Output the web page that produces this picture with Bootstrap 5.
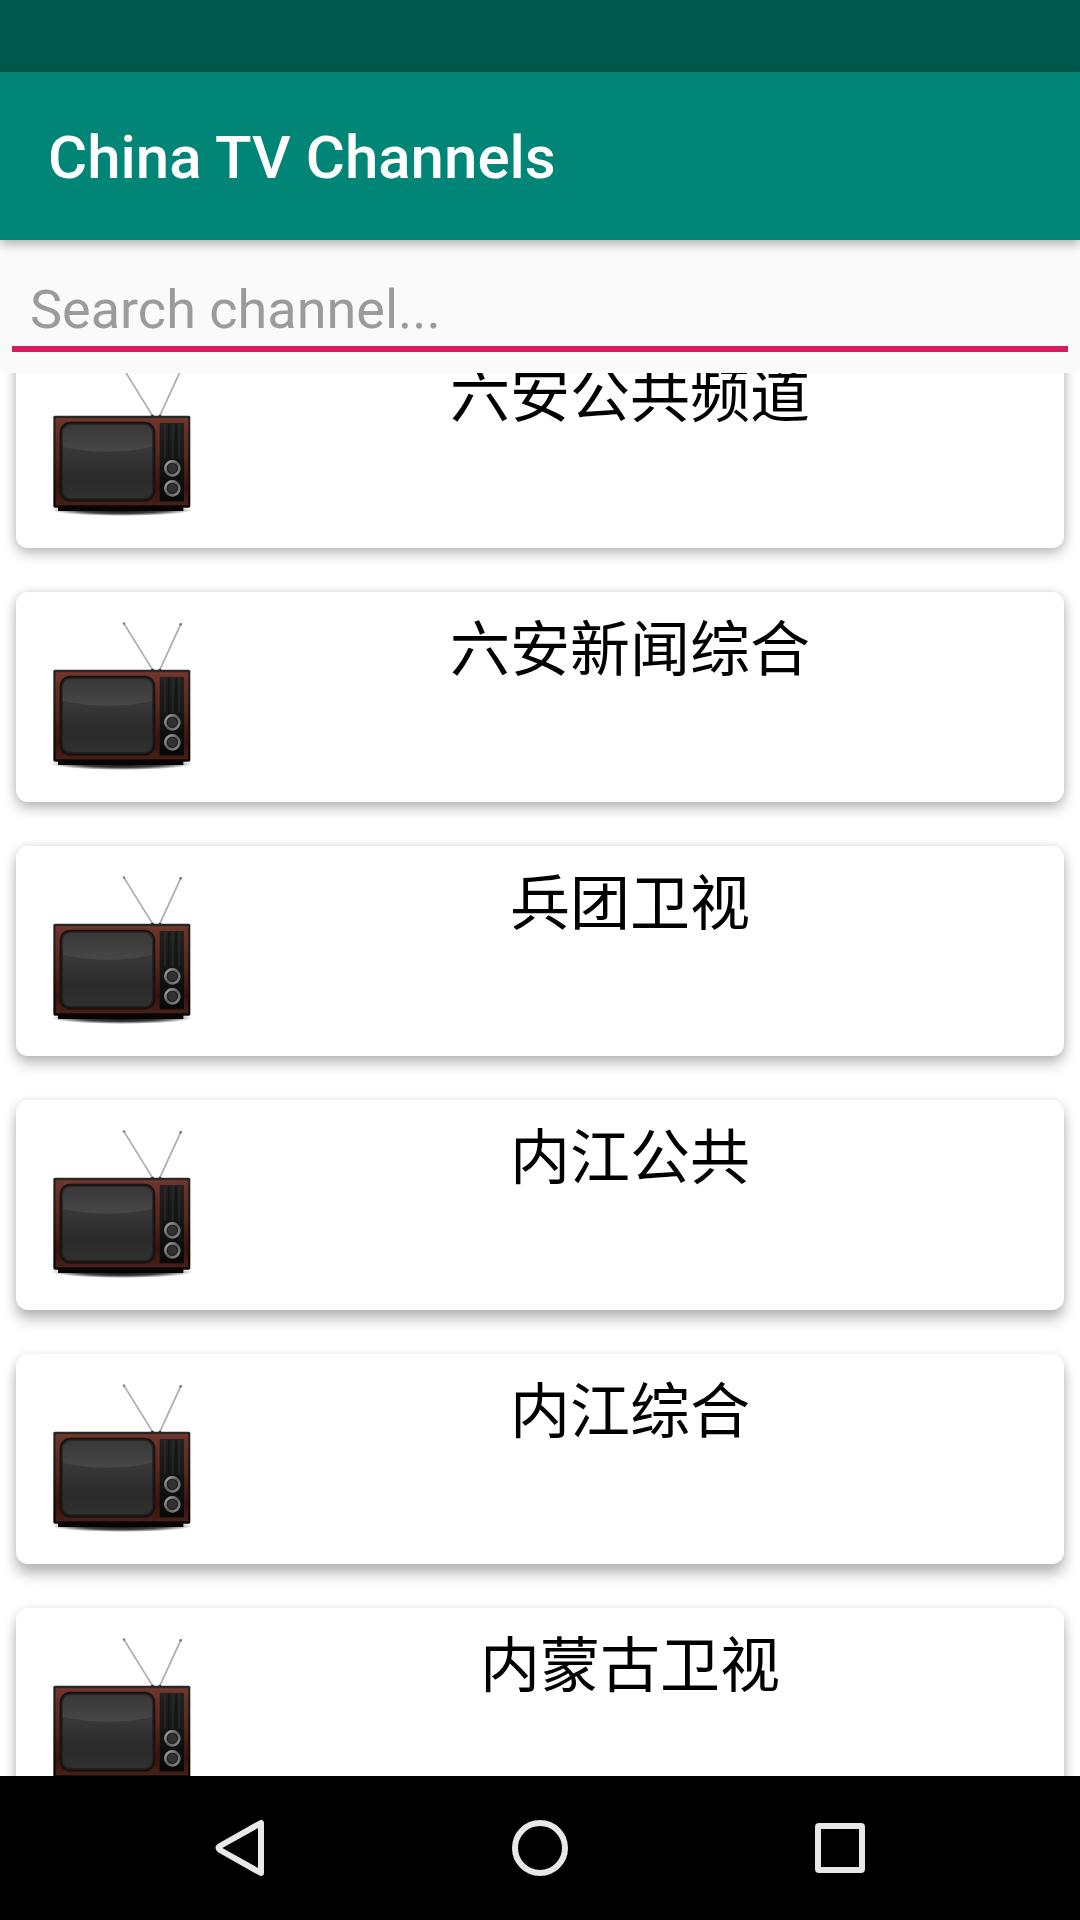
<!DOCTYPE html>
<html lang="en">
<head>
<meta charset="utf-8">
<meta name="viewport" content="width=device-width, initial-scale=1">
<title>China TV Channels</title>
<link href="https://cdn.jsdelivr.net/npm/bootstrap@5.3.0/dist/css/bootstrap.min.css" rel="stylesheet">
<style>
body { font-family: Roboto, "Noto Sans CJK SC", sans-serif; background: #fafafa; }
.status-strip { height: 72px; background: #00574b; }
.app-bar { min-height: 168px; padding: 4px 48px 0; background: #008577; box-shadow: 0 4px 10px rgba(0,0,0,.3); z-index: 2; }
.app-title { font-size: 60px; line-height: 72px; font-weight: 500; }
.search-area { padding: 22px 12px 21px; }
.search-box, .search-box:focus { height: 90px; padding: 10px 18px 0; font-size: 54px; line-height: 64px; background: transparent; border: 0; border-bottom: 6px solid #d81b60; border-radius: 0; box-shadow: none; color: #000; }
.search-box::placeholder { color: #9b9b9b; opacity: 1; }
.channel-view { background: #fff; min-height: 0; }
/* The list rests part-way through the first row */
.channel-list { margin-top: -35px; padding: 0 16px; gap: 44px; }
.channel-card { height: 210px; padding: 24px 0 0 30px; border: 0; border-radius: 12px; background: #fff; box-shadow: 0 var(--drop) 14px rgba(0,0,0,.27), 0 0 8px rgba(0,0,0,.09); }
.channel-list li:nth-child(1) { --drop: 5px; }
.channel-list li:nth-child(2) { --drop: 6px; }
.channel-list li:nth-child(3) { --drop: 7px; }
.channel-list li:nth-child(4) { --drop: 9px; }
.channel-list li:nth-child(n+5) { --drop: 10px; }
.tv-icon { width: 150px; height: 156px; }
.channel-name { font-size: 60px; line-height: 70px; font-weight: 400; color: #000; }
.nav-keys { height: 144px; background: #000; }
.nav-key { width: 28%; max-width: 300px; }
.nav-key svg { width: 64px; height: 64px; fill: none; stroke: #e8e8e8; stroke-width: 6; stroke-linejoin: round; }
</style>
<script src="https://cdn.jsdelivr.net/npm/bootstrap@5.3.0/dist/js/bootstrap.bundle.min.js"></script>
</head>
<body class="d-flex flex-column vh-100 overflow-hidden">
<svg width="0" height="0" class="position-absolute" aria-hidden="true">
  <defs>
    <linearGradient id="wood" x1="0" y1="0" x2="0" y2="1"><stop offset="0" stop-color="#70352a"/><stop offset=".45" stop-color="#55261c"/><stop offset=".8" stop-color="#36140e"/><stop offset="1" stop-color="#482017"/></linearGradient>
    <linearGradient id="edge" x1="0" y1="0" x2="0" y2="1"><stop offset="0" stop-color="#2a2826"/><stop offset="1" stop-color="#0c0404"/></linearGradient>
    <linearGradient id="glass" x1="0" y1="0" x2="0" y2="1"><stop offset="0" stop-color="#404040"/><stop offset=".4" stop-color="#363636"/><stop offset=".7" stop-color="#2a2a2a"/><stop offset="1" stop-color="#303030"/></linearGradient>
    <linearGradient id="shine" x1="0" y1="0" x2="0" y2="1"><stop offset="0" stop-color="#383838"/><stop offset="1" stop-color="#474747"/></linearGradient>
    <linearGradient id="ring" x1="0" y1="0" x2="1" y2="1"><stop offset="0" stop-color="#a8a8a8"/><stop offset=".5" stop-color="#5c5c5c"/><stop offset="1" stop-color="#8a8a8a"/></linearGradient>
    <linearGradient id="panel" x1="0" y1="0" x2="0" y2="1"><stop offset="0" stop-color="#222"/><stop offset="1" stop-color="#070707"/></linearGradient>
    <radialGradient id="floor"><stop offset="0" stop-color="#000"/><stop offset=".6" stop-color="#111" stop-opacity=".8"/><stop offset="1" stop-color="#000" stop-opacity="0"/></radialGradient>
    <symbol id="tv" viewBox="48 48 450 468">
      <g fill="none" stroke-linecap="round">
        <path d="M282 71L367 208M452 73L390 208" stroke="#a0a0a0" stroke-width="5"/>
        <path d="M282 71L367 208M452 73L390 208" stroke="#c4c4c4" stroke-width="2"/>
      </g>
      <circle cx="282" cy="71" r="4" fill="#888"/><circle cx="452" cy="73" r="4" fill="#777"/>
      <path d="M361 211l4-5h5l3 5zM385 211l3-5h4l3 5z" fill="#333"/>
      <ellipse cx="276" cy="492" rx="212" ry="18" fill="url(#floor)"/>
      <path d="M84 480H460V495H84Z" fill="#050505"/>
      <rect x="70" y="209" width="411" height="276" rx="5" fill="url(#edge)"/>
      <rect x="77" y="217" width="397" height="261" rx="2" fill="url(#wood)"/>
      <path d="M78 220H473" stroke="#84402f" stroke-width="3" opacity=".5"/>
      <rect x="89" y="227" width="287" height="240" rx="32" fill="#1a100e"/>
      <rect x="95" y="233" width="275" height="227" rx="26" fill="url(#glass)"/>
      <path d="M96 302V260Q97 234 121 234H344Q369 234 369 260V302Q235 332 96 302Z" fill="url(#shine)"/>
      <rect x="96" y="234" width="273" height="225" rx="26" fill="none" stroke="#181818" stroke-width="6" opacity=".55"/>
      <rect x="389" y="231" width="73" height="235" fill="url(#panel)"/>
      <path d="M405 234V338M428 234V338M448 234V338" stroke="#303030" stroke-width="5" opacity=".6"/>
      <path d="M416 234V340M438 234V340" stroke="#101010" stroke-width="4" opacity=".7"/>
      <g fill="#282a2a" stroke="url(#ring)" stroke-width="8"><circle cx="427" cy="367" r="21"/><circle cx="427" cy="427" r="21"/></g>
      <g fill="#303232" stroke="#1c1c1c" stroke-width="3"><circle cx="427" cy="367" r="15"/><circle cx="427" cy="427" r="15"/></g>
    </symbol>
  </defs>
</svg>

<div class="status-strip flex-shrink-0"></div>
<header class="app-bar d-flex align-items-center flex-shrink-0 position-relative">
  <h1 class="app-title text-white mb-0">China TV Channels</h1>
</header>
<form class="search-area flex-shrink-0" role="search">
  <label for="channelSearch" class="visually-hidden">Search channel</label>
  <input id="channelSearch" type="text" class="form-control search-box" placeholder="Search channel...">
</form>
<main class="channel-view flex-grow-1 overflow-hidden">
  <ul class="channel-list list-unstyled d-flex flex-column mb-0" lang="zh-CN">
    <li class="card channel-card flex-row"><svg class="tv-icon flex-shrink-0" aria-hidden="true"><use href="#tv"/></svg><h2 class="channel-name flex-grow-1 text-center mb-0">六安公共频道</h2></li>
    <li class="card channel-card flex-row"><svg class="tv-icon flex-shrink-0" aria-hidden="true"><use href="#tv"/></svg><h2 class="channel-name flex-grow-1 text-center mb-0">六安新闻综合</h2></li>
    <li class="card channel-card flex-row"><svg class="tv-icon flex-shrink-0" aria-hidden="true"><use href="#tv"/></svg><h2 class="channel-name flex-grow-1 text-center mb-0">兵团卫视</h2></li>
    <li class="card channel-card flex-row"><svg class="tv-icon flex-shrink-0" aria-hidden="true"><use href="#tv"/></svg><h2 class="channel-name flex-grow-1 text-center mb-0">内江公共</h2></li>
    <li class="card channel-card flex-row"><svg class="tv-icon flex-shrink-0" aria-hidden="true"><use href="#tv"/></svg><h2 class="channel-name flex-grow-1 text-center mb-0">内江综合</h2></li>
    <li class="card channel-card flex-row"><svg class="tv-icon flex-shrink-0" aria-hidden="true"><use href="#tv"/></svg><h2 class="channel-name flex-grow-1 text-center mb-0">内蒙古卫视</h2></li>
  </ul>
</main>
<nav class="nav-keys d-flex justify-content-center align-items-stretch flex-shrink-0" aria-label="System">
  <button type="button" class="btn nav-key p-0 border-0" aria-label="Back"><svg viewBox="0 0 64 64"><path d="M53 7V57L12 34Q9 32 12 30Z"/></svg></button>
  <button type="button" class="btn nav-key p-0 border-0" aria-label="Home"><svg viewBox="0 0 64 64"><circle cx="32" cy="32" r="25"/></svg></button>
  <button type="button" class="btn nav-key p-0 border-0" aria-label="Recent apps"><svg viewBox="0 0 64 64"><rect x="10" y="10" width="44" height="44" rx="1"/></svg></button>
</nav>
</body>
</html>
